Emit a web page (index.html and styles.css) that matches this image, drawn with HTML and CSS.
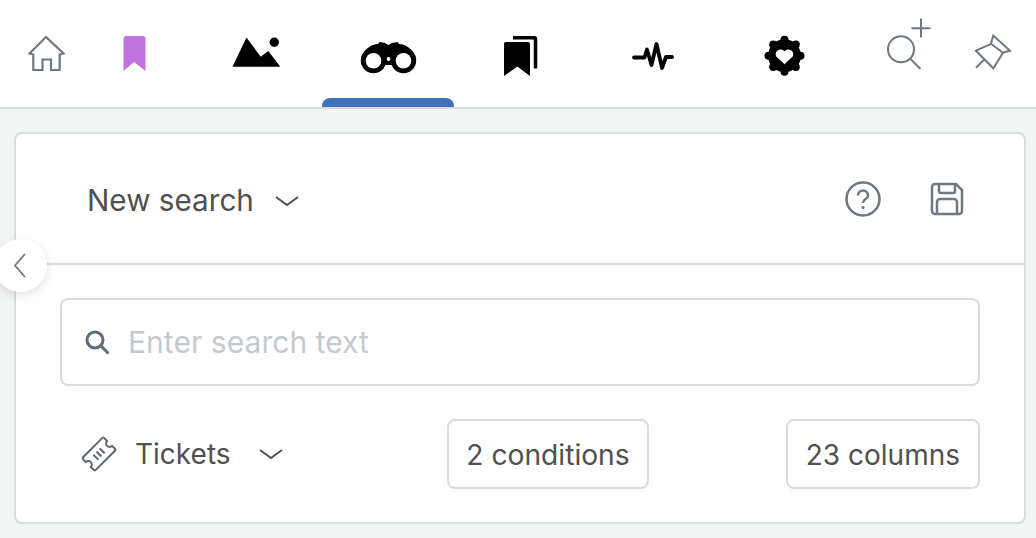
FILE: index.html
```html
<!DOCTYPE html>
<html lang="en">
<head>
<meta charset="utf-8">
<title>New search</title>
<link rel="stylesheet" href="styles.css">
</head>
<body>
<nav class="nav">
  <a class="nav-item w-home"><svg class="nav-icon line home" viewBox="0 0 92 107"><path d="M29.500 53.500 46 37l17.500 16.500-3.800 1V70H51V59.500H42.500V70H33.300V54.500Z"/></svg></a>
  <a class="nav-item w-mark"><svg class="nav-icon" viewBox="92 0 84 107"><path class="purple" d="M126.500 36h16a3 3 0 0 1 3 3v32l-11.500-9-10.500 9V39a3 3 0 0 1 3-3Z"/></svg></a>
  <div class="tabs">
    <a class="nav-item tab"><svg class="nav-icon" viewBox="190 0 132 107"><path d="M246.500 37.500 260.700 56.700 268.300 51 280.300 66.700H232.500Z"/><circle cx="274.300" cy="42.300" r="4.700"/></svg></a>
    <a class="nav-item tab active"><svg class="nav-icon" viewBox="322 0 132 107"><path d="M361.500 57C363.500 50 371 44 378 44l1.500-2 5.500 1 3.500 2 3.500-2 5.500-1 1.500 2C406 44 413.500 50 415.500 57L405 65H372Z"/><circle cx="373.500" cy="60.500" r="12.700"/><circle cx="403.500" cy="60.500" r="12.700"/><circle class="hole" cx="373.500" cy="60.800" r="7.800"/><circle class="hole" cx="403.500" cy="60.800" r="7.800"/><circle class="hole" cx="388.500" cy="59" r="1.900"/></svg></a>
    <a class="nav-item tab"><svg class="nav-icon" viewBox="454 0 132 107"><path d="M506.500 42h21.500a2 2 0 0 1 2 2v32l-12.700-9.500-13.300 9.500V44a2 2 0 0 1 2.500-2Z"/><path class="thick" d="M513 37.700h21a1.500 1.500 0 0 1 1.500 1.500V68.500"/></svg></a>
    <a class="nav-item tab"><svg class="nav-icon" viewBox="586 0 132 107"><path class="pulse" d="M634 57.500h10.500l2.500-8 4.500 15.500 5-21 5.500 24 4-11h6"/></svg></a>
    <a class="nav-item tab"><svg class="nav-icon" viewBox="718 0 132 107"><circle cx="784.500" cy="55.700" r="16.500"/><circle cx="784.500" cy="39.700" r="4"/><circle cx="784.500" cy="71.700" r="4"/><circle cx="768.500" cy="55.700" r="4"/><circle cx="800.500" cy="55.700" r="4"/><circle cx="773.200" cy="44.400" r="4"/><circle cx="795.800" cy="44.400" r="4"/><circle cx="773.200" cy="67" r="4"/><circle cx="795.800" cy="67" r="4"/><path class="hole" d="M784.500 64.300 776.300 56.500C773.800 51 780.700 46.800 784.500 51.500 788.300 46.800 795.200 51 792.700 56.500Z"/></svg></a>
  </div>
  <a class="nav-item w-search"><svg class="nav-icon line" viewBox="850 0 108 107"><circle cx="901" cy="49.300" r="13"/><path d="m910 58.500 10.500 10.500M921 18.500v19M911.500 28.300h19"/></svg></a>
  <a class="nav-item w-pin"><svg class="nav-icon line" viewBox="958 0 78 107"><path d="M976 50.700 991 43.800 1003 52.800 993.300 68.300ZM976 67.700 983.700 60M991 43.500 993.300 35.500 1010 50.700 1002.500 52.800"/></svg></a>
</nav>
<main class="main">
  <section class="card">
    <button class="collapse" type="button" aria-label="Collapse"><svg class="collapse-icon" viewBox="0 0 12 26"><path d="M11 1 1 12.500 11 24"/></svg></button>
    <header class="card-head">
      <div class="select title">
        <span>New search</span>
        <svg class="chev" viewBox="0 0 26 12"><path d="M2 2l11 8L24 2"/></svg>
      </div>
      <div class="head-actions">
        <svg class="head-icon" viewBox="0 0 36 36"><circle cx="18" cy="18" r="16.500"/><path d="M13 14.500a5 5 0 0 1 10 0c0 3.500-5 3.500-5 7.500"/><circle class="dot" cx="18" cy="26.500" r="1.600"/></svg>
        <svg class="head-icon save" viewBox="0 0 34 34"><path d="M5 2h21l6 6v21a3 3 0 0 1-3 3H5a3 3 0 0 1-3-3V5a3 3 0 0 1 3-3Z"/><path d="M9 2v7a2 2 0 0 0 2 2h12a2 2 0 0 0 2-2V2M7 32V20a3 3 0 0 1 3-3h14a3 3 0 0 1 3 3v12"/></svg>
      </div>
    </header>
    <div class="card-body">
      <label class="search-box">
        <svg class="search-icon" viewBox="0 0 26 26"><circle cx="11" cy="11" r="8"/><path d="m17 17 7.500 7.500"/></svg>
        <input class="search-input" type="text" placeholder="Enter search text">
      </label>
      <div class="filters">
        <div class="select source">
          <svg class="ticket" viewBox="0 0 36 36"><g transform="rotate(-45 18 18)"><path d="M4.500 9h27a1.500 1.500 0 0 1 1.500 1.500V14.500a3.500 3.500 0 0 0 0 7v4a1.500 1.500 0 0 1-1.500 1.500h-27A1.500 1.500 0 0 1 3 25.500V21.500a3.500 3.500 0 0 0 0-7v-4A1.500 1.500 0 0 1 4.500 9Z"/><path d="M13.500 14.500v7M18 14.500v7M22.500 14.500v7"/></g></svg>
          <span>Tickets</span>
          <svg class="chev" viewBox="0 0 26 12"><path d="M2 2l11 8L24 2"/></svg>
        </div>
        <button class="pill first" type="button">2 conditions</button>
        <button class="pill push" type="button">23 columns</button>
      </div>
    </div>
  </section>
</main>
</body>
</html>
```
FILE: styles.css
```css
* { box-sizing: border-box; }
html, body { margin: 0; height: 100%; overflow: hidden; }
body { background: #f3f4f4; font-family: Inter, "Liberation Sans", sans-serif; color: #505050; }

.nav { display: flex; height: 109px; background: #fff; border-bottom: 2px solid #d8dce0; }
.nav-item { position: relative; display: block; height: 107px; flex: none; }
.nav-icon { display: block; width: 100%; height: 107px; fill: #000; }
.w-home { width: 92px; }
.w-mark { width: 84px; }
.w-search { width: 108px; }
.w-pin { width: 78px; }
.tabs { display: flex; margin-left: 14px; }
.tab { width: 132px; }
.active::after { content: ""; position: absolute; left: 0; right: 0; bottom: 0; height: 9px; background: #3f72b8; border-radius: 8px 8px 0 0; }
.line { fill: none; stroke: #6f7881; stroke-width: 2; }
.home { stroke-width: 2.200; }
.purple { fill: #bf73de; }
.hole { fill: #fff; }
.thick { fill: none; stroke: #000; stroke-width: 3.500; }
.pulse { fill: none; stroke: #000; stroke-width: 3.800; stroke-linecap: round; stroke-linejoin: round; }

.main { padding: 23px 10px 0 14px; }
.card { position: relative; height: 392px; background: #fff; border: 2px solid #d8dce0; border-radius: 8px; }

.collapse { position: absolute; left: -22px; top: 105px; z-index: 1; display: flex; align-items: center; justify-content: flex-end; width: 53px; height: 53px; padding: 0 21px 0 0; background: #fff; border: 0; border-radius: 50%; box-shadow: 0 3px 10px rgba(0, 0, 0, .12); }
.collapse-icon { width: 12px; height: 26px; fill: none; stroke: #6f7881; stroke-width: 1.800; }

.card-head { display: flex; align-items: center; justify-content: space-between; height: 131px; padding: 0 60px 0 71px; border-bottom: 2px solid #d8dce0; }
.select { display: flex; align-items: center; }
.title { padding-top: 2px; font-size: 29.700px; gap: 20px; }
.title .chev { margin-top: 2px; }
.chev { width: 26px; height: 12px; fill: none; stroke: #505050; stroke-width: 2; }
.head-actions { display: flex; align-items: center; gap: 49px; }
.head-icon { width: 36px; height: 36px; fill: none; stroke: #6f7881; stroke-width: 2.500; }
.head-icon.save { width: 34px; height: 34px; }
.dot { fill: #6f7881; stroke: none; }

.card-body { padding: 33px 44px 0; }
.search-box { display: flex; align-items: center; height: 88px; padding-left: 22px; gap: 18px; border: 2px solid #d8dce0; border-radius: 8px; }
.search-icon { width: 26px; height: 26px; flex: none; fill: none; stroke: #5f6b76; stroke-width: 3; }
.search-input { flex: 1; min-width: 0; height: 60px; padding: 0; border: 0; outline: 0; background: none; font: 30.100px Inter, "Liberation Sans", sans-serif; color: #505050; }
.search-input::placeholder { color: #c4c9ce; opacity: 1; }

.filters { display: flex; align-items: center; margin-top: 33px; }
.source { width: 387px; padding-left: 21px; font-size: 28px; gap: 18px; }
.ticket { width: 36px; height: 36px; fill: none; stroke: #5f666c; stroke-width: 2; }
.source .chev { margin-left: 9px; }
.pill { height: 70px; padding: 2px 18px 0; background: #fff; border: 2px solid #d8dce0; border-radius: 8px; font: 28px Inter, "Liberation Sans", sans-serif; color: #505050; }
.pill.first { width: 202px; padding: 2px 0 0; font-size: 28.200px; }
.pill.push { margin-left: auto; }
```
